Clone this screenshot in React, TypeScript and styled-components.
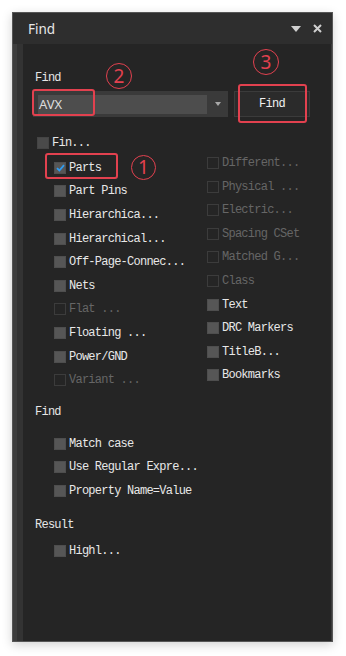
import React from "react";
import styled, { createGlobalStyle } from "styled-components";

const GlobalStyle = createGlobalStyle`
  html, body {
    margin: 0;
    padding: 0;
    background: #ffffff;
  }
  body {
    width: 346px;
    height: 656px;
    overflow: hidden;
  }
`;

const RED = "#e2414f";
const MONO = `"Liberation Mono", "DejaVu Sans Mono", monospace`;

type Item = { label: string; on?: boolean; checked?: boolean };

const leftItems: Item[] = [
  { label: "Parts", on: true, checked: true },
  { label: "Part Pins", on: true },
  { label: "Hierarchica...", on: true },
  { label: "Hierarchical...", on: true },
  { label: "Off-Page-Connec...", on: true },
  { label: "Nets", on: true },
  { label: "Flat ..." },
  { label: "Floating ...", on: true },
  { label: "Power/GND", on: true },
  { label: "Variant ..." },
];

const rightItems: Item[] = [
  { label: "Different..." },
  { label: "Physical ..." },
  { label: "Electric..." },
  { label: "Spacing CSet" },
  { label: "Matched G..." },
  { label: "Class" },
  { label: "Text", on: true },
  { label: "DRC Markers", on: true },
  { label: "TitleB...", on: true },
  { label: "Bookmarks", on: true },
];

const findItems: Item[] = [
  { label: "Match case", on: true },
  { label: "Use Regular Expre...", on: true },
  { label: "Property Name=Value", on: true },
];

const CheckRow = ({ item, indent }: { item: Item; indent?: boolean }) => (
  <Row $indent={indent}>
    <Box $on={item.on}>
      {item.checked && (
        <svg width="9" height="8" viewBox="0 0 9 8">
          <path d="M1 4.2 L3.4 6.5 L8 1.2" stroke="#2f9df2" strokeWidth="1.8" fill="none" />
        </svg>
      )}
    </Box>
    <Label $on={item.on}>{item.label}</Label>
  </Row>
);

const App = () => {
  return (
    <>
      <GlobalStyle />
      <Page>
        <Panel>
          <Header>
            <Title>Find</Title>
            <HeaderIcons>
              <svg width="10" height="6" viewBox="0 0 10 6">
                <path d="M0 0 H10 L5 6 Z" fill="#d0d0d0" />
              </svg>
              <svg width="9" height="9" viewBox="0 0 9 9">
                <path d="M1 1 L8 8 M8 1 L1 8" stroke="#d0d0d0" strokeWidth="2" />
              </svg>
            </HeaderIcons>
          </Header>
          <Body>
            <Gutter />
            <Content>
              <SectionLabel>Find</SectionLabel>
              <SearchRow>
                <Combo>
                  <Field>AVX</Field>
                  <ComboArrow>
                    <svg width="6" height="4" viewBox="0 0 6 4">
                      <path d="M0 0 H6 L3 4 Z" fill="#a8a8a8" />
                    </svg>
                  </ComboArrow>
                </Combo>
                <FindButton>Find</FindButton>
              </SearchRow>
              <Columns>
                <LeftCol>
                  <TopRow>
                    <Box $hatch />
                    <Label $on>Fin...</Label>
                  </TopRow>
                  {leftItems.map((it) => (
                    <CheckRow key={it.label} item={it} indent />
                  ))}
                </LeftCol>
                <RightCol>
                  {rightItems.map((it) => (
                    <CheckRow key={it.label} item={it} />
                  ))}
                </RightCol>
              </Columns>
              <SectionLabel $gap={13}>Find</SectionLabel>
              <Group $gap={13}>
                {findItems.map((it) => (
                  <CheckRow key={it.label} item={it} indent />
                ))}
              </Group>
              <SectionLabel $gap={15}>Result</SectionLabel>
              <Group $gap={7.5}>
                <CheckRow item={{ label: "Highl...", on: true }} indent />
              </Group>
            </Content>
          </Body>
        </Panel>

        <Mark $left={32} $top={89} $w={63} $h={27} />
        <Mark $left={238} $top={84} $w={69} $h={39} />
        <Mark $left={45} $top={153} $w={73} $h={26} />
        <Circled $left={106} $top={63} $size={26}>2</Circled>
        <Circled $left={253} $top={49} $size={26}>3</Circled>
        <Circled $left={131} $top={155} $size={25}>1</Circled>
      </Page>
    </>
  );
};

export default App;

const Page = styled.div`
  position: relative;
  width: 346px;
  height: 656px;
  padding: 12px 13px 14px 12px;
  box-sizing: border-box;
`;

const Panel = styled.div`
  width: 321px;
  height: 630px;
  box-sizing: border-box;
  display: flex;
  flex-direction: column;
  background: #252525;
  border: 1px solid #565656;
  box-shadow: 0 3px 10px rgba(0, 0, 0, 0.18);
`;

const Header = styled.div`
  height: 31px;
  flex-shrink: 0;
  display: flex;
  align-items: center;
  padding: 0 10px 0 15px;
  background: #2e2e2e;
`;

const Title = styled.div`
  font-family: "Noto Sans", "Open Sans", sans-serif;
  font-size: 13.5px;
  color: #e8e8e8;
`;

const HeaderIcons = styled.div`
  margin-left: auto;
  display: flex;
  align-items: center;
  gap: 12px;
`;

const Body = styled.div`
  flex: 1;
  display: flex;
`;

const Gutter = styled.div`
  width: 10px;
  box-sizing: border-box;
  background: #333333;
  border-left: 4px solid #3e3e3e;
`;

const Content = styled.div`
  flex: 1;
  padding: 27px 0 0 12px;
  border-right: 1px solid #3a3a3a;
  background: #252525;
`;

const SectionLabel = styled.div<{ $gap?: number }>`
  margin-top: ${(p) => p.$gap ?? 0}px;
  height: 14px;
  line-height: 14px;
  font-family: ${MONO};
  font-size: 12px;
  letter-spacing: -0.75px;
  color: #e6e6e6;
`;

const SearchRow = styled.div`
  margin-top: 6px;
  display: flex;
  align-items: center;
`;

const Combo = styled.div`
  margin-left: -2px;
  width: 195px;
  height: 26px;
  box-sizing: border-box;
  display: flex;
  align-items: center;
  padding-left: 5px;
  background: #3a3a3a;
`;

const Field = styled.div`
  width: 169px;
  height: 19px;
  line-height: 19px;
  background: #4d4d4d;
  font-family: "Noto Sans", "Liberation Sans", sans-serif;
  font-size: 13px;
  color: #dcdcdc;
  padding-left: 1px;
  box-sizing: border-box;
`;

const ComboArrow = styled.div`
  flex: 1;
  display: flex;
  justify-content: center;
  align-items: center;
`;

const FindButton = styled.div`
  margin-left: 6px;
  width: 76px;
  height: 26px;
  box-sizing: border-box;
  display: flex;
  align-items: center;
  justify-content: center;
  background: #2b2b2b;
  border: 1px solid #3b3b3b;
  font-family: ${MONO};
  font-size: 12px;
  letter-spacing: -0.75px;
  color: #f0f0f0;
`;

const Columns = styled.div`
  margin-top: 13px;
  display: flex;
`;

const LeftCol = styled.div`
  width: 172px;
  display: flex;
  flex-direction: column;
`;

const RightCol = styled.div`
  flex: 1;
  padding-top: 21.2px;
  display: flex;
  flex-direction: column;
`;

const Group = styled.div<{ $gap: number }>`
  margin-top: ${(p) => p.$gap}px;
  display: flex;
  flex-direction: column;
`;

const Row = styled.div<{ $indent?: boolean }>`
  height: 23.6px;
  display: flex;
  align-items: center;
  gap: 3px;
  padding-left: ${(p) => (p.$indent ? 19 : 0)}px;
  white-space: nowrap;
`;

const TopRow = styled.div`
  height: 26px;
  display: flex;
  align-items: center;
  gap: 3px;
  padding-left: 2px;
`;

const Box = styled.span<{ $on?: boolean; $hatch?: boolean }>`
  width: 12px;
  height: 12px;
  box-sizing: border-box;
  flex-shrink: 0;
  display: flex;
  align-items: center;
  justify-content: center;
  background: ${(p) => (p.$hatch ? "#4a4a4a" : p.$on ? "#565656" : "transparent")};
  border: 1px solid ${(p) => (p.$hatch ? "#444" : p.$on ? "#4e4e4e" : "#3c3c3c")};
`;

const Label = styled.span<{ $on?: boolean }>`
  font-family: ${MONO};
  font-size: 12px;
  letter-spacing: -0.75px;
  color: ${(p) => (p.$on ? "#e8e8e8" : "#666666")};
`;

const Mark = styled.div<{ $left: number; $top: number; $w: number; $h: number }>`
  position: absolute;
  left: ${(p) => p.$left}px;
  top: ${(p) => p.$top}px;
  width: ${(p) => p.$w}px;
  height: ${(p) => p.$h}px;
  box-sizing: border-box;
  border: 2px solid ${RED};
  border-radius: 3px;
`;

const Circled = styled.div<{ $left: number; $top: number; $size: number }>`
  position: absolute;
  left: ${(p) => p.$left}px;
  top: ${(p) => p.$top}px;
  width: ${(p) => p.$size}px;
  height: ${(p) => p.$size}px;
  box-sizing: border-box;
  border: 1.6px solid ${RED};
  border-radius: 50%;
  display: flex;
  align-items: center;
  justify-content: center;
  font-family: "Noto Sans", "Liberation Sans", sans-serif;
  font-size: 19px;
  line-height: 1;
  color: ${RED};
`;
